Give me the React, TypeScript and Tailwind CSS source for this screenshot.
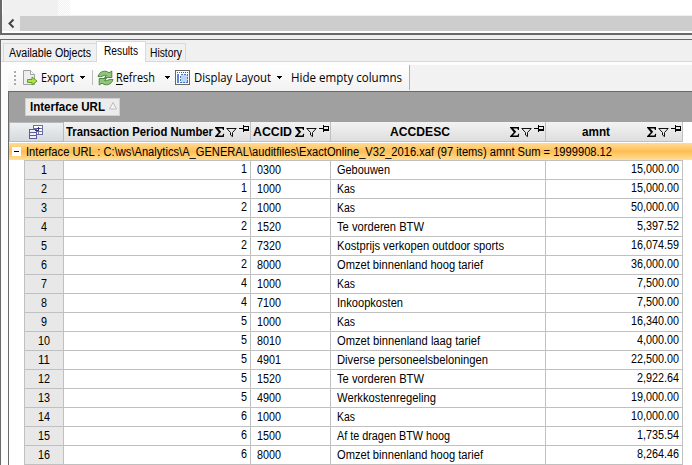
import React, { useLayoutEffect, useRef, useState } from "react";

const ui = "font-['Open_Sans','Noto_Sans',sans-serif]";

// A label condensed or widened to the width of its slot.
function T({ children, w, className = "" }: { children: React.ReactNode; w: number; className?: string }) {
  const ref = useRef<HTMLSpanElement>(null);
  const [scale, setScale] = useState(1);
  useLayoutEffect(() => {
    if (ref.current) setScale(w / ref.current.getBoundingClientRect().width);
  }, [w]);
  return (
    <span className={"block h-4 shrink-0 leading-4 " + className} style={{ width: w }}>
      <span className="block w-max origin-left whitespace-nowrap" style={{ transform: `scaleX(${scale})` }}>
        <span ref={ref} className="inline-block">{children}</span>
      </span>
    </span>
  );
}

const rows: [string, string, string, number, string][] = [
  ["1", "0300", "Gebouwen", 53, "15,000.00"],
  ["1", "1000", "Kas", 18, "15,000.00"],
  ["2", "1000", "Kas", 18, "50,000.00"],
  ["2", "1520", "Te vorderen BTW", 87, "5,397.52"],
  ["2", "7320", "Kostprijs verkopen outdoor sports", 167, "16,074.59"],
  ["2", "8000", "Omzet binnenland hoog tarief", 146, "36,000.00"],
  ["4", "1000", "Kas", 18, "7,500.00"],
  ["4", "7100", "Inkoopkosten", 66, "7,500.00"],
  ["5", "1000", "Kas", 18, "16,340.00"],
  ["5", "8010", "Omzet binnenland laag tarief", 143, "4,000.00"],
  ["5", "4901", "Diverse personeelsbeloningen", 151, "22,500.00"],
  ["5", "1520", "Te vorderen BTW", 87, "2,922.64"],
  ["5", "4900", "Werkkostenregeling", 99, "19,000.00"],
  ["6", "1000", "Kas", 18, "10,000.00"],
  ["6", "1500", "Af te dragen BTW hoog", 113, "1,735.54"],
  ["6", "8000", "Omzet binnenland hoog tarief", 146, "8,264.46"],
];

function Tools() {
  return (
    <svg width="36" height="14" viewBox="0 0 36 14" className="shrink-0">
      <path d="M1 2H10V5H9L8.3 3.4H4.2L7.2 6.8L3.8 10.4H8.5L9.3 8.8H10.2L9.8 12H1V11.2L4.8 7.2L1 2.8Z" fill="#000" />
      <path d="M12.8 3.5H22.2L18.5 7.5V11.6L16.5 10V7.5Z" fill="none" stroke="#111" />
      <path d="M25 3.5H29M29.5 0V7M30 1.5H34.5V5.5H30M30 4.5H34" fill="none" stroke="#000" shapeRendering="crispEdges" />
    </svg>
  );
}

const Caret = () => (
  <svg width="5" height="3" className="shrink-0" shapeRendering="crispEdges"><path d="M0 0H5L2.5 3Z" /></svg>
);

function ExportIcon() {
  return (
    <svg width="16" height="16" viewBox="0 0 16 16">
      <path d="M1.5.5H8.5L12.5 4.5V14.5H1.5Z" fill="#eee" stroke="#a0a0a0" />
      <path d="M8.5.5V4.5H12.5" fill="#fff" stroke="#a0a0a0" />
      <path d="M5.5 9.5H10V7L15 11L10 15V12.5H5.5Z" fill="#b4e04a" stroke="#5f9d2c" />
    </svg>
  );
}

function RefreshIcon() {
  return (
    <svg width="17" height="16" viewBox="0 0 17 16">
      <path d="M1 6.5C2.5 1 8.5-.2 12 2.8L14.8 1V7.5H7.5L9.4 5.5C7 4.2 5.5 7.5 1 6.5Z" fill="#92c57c" stroke="#467f39" strokeWidth=".9" />
      <path d="M16 9.5C14.5 15 8.5 16.2 5 13.2L2.2 15V8.5H9.5L7.6 10.5C10 11.8 11.5 8.5 16 9.5Z" fill="#92c57c" stroke="#467f39" strokeWidth=".9" />
    </svg>
  );
}

function LayoutIcon() {
  return (
    <svg width="15" height="15" viewBox="0 0 15 15" shapeRendering="crispEdges">
      <rect x=".5" y=".5" width="14" height="14" fill="#fff" stroke="#666" />
      <path d="M2 2.5H13" stroke="#2f66b8" strokeDasharray="1 1" />
      <rect x="2" y="4" width="2" height="9" fill="#5b8ad0" />
      <rect x="5.5" y="4.5" width="7" height="8" fill="#c0d6f5" stroke="#4677c5" strokeDasharray="2 1" />
    </svg>
  );
}

function ChooserIcon() {
  return (
    <svg width="15" height="14" viewBox="0 0 15 14" shapeRendering="crispEdges">
      <path d="M4.5.5H13.5V9.5H4.5ZM4.5 3.5H13.5M4.5 6.5H13.5M9.5 3V9" fill="#fff" stroke="#6c6ca8" />
      <path d="M.5 4.5H7.5V13.5H.5ZM.5 7.5H7.5M.5 10.5H7.5" fill="#f0f0f8" stroke="#5c5c9c" />
      <path d="M6 5.5H9.5V2M8 3.5H11" fill="none" stroke="#333377" />
    </svg>
  );
}

const head = "flex h-[20px] shrink-0 items-start border-b border-r border-[#c0c0c0] bg-linear-to-b from-[#f3f3f3] to-[#dedede] pt-[2px]";

export default function App() {
  return (
    <div className="h-[465px] w-[692px] overflow-hidden bg-[#f0f0f0] font-['Liberation_Sans',Arial,sans-serif] text-[12px] text-black">
      <div className="flex h-[35px] flex-col border-b-2 border-l-2 border-b-[#696969] border-l-[#696969] bg-white">
        <div className="flex h-[15px] pl-px">
          <div className="w-[55px] bg-[#f0f0f0]" />
          <div className="w-3 bg-[conic-gradient(#f0f0f0_25%,white_0_50%,#f0f0f0_0_75%,white_0)] bg-[length:2px_2px]" />
        </div>
        <div className="flex h-[16px] items-center bg-[#f0f0f0] pl-[5px]">
          <svg width="13" height="16"><path d="M6.5 4.5L2.5 8.5L6.5 12.5" fill="none" stroke="#444" strokeWidth="2" /></svg>
          <div className="h-[15px] flex-1 bg-[#cdcdcd]" />
        </div>
      </div>
      <div className="h-1" />
      <div className="h-[426px] border-l border-t border-[#696969]">
        <div className="flex h-[22px] items-end border-b border-[#d9d9d9] pl-[2px]">
          <div className="flex h-[18px] w-[93px] items-center border-l border-t border-[#d9d9d9] pl-[5px]"><T w={82}>Available Objects</T></div>
          <div className="-mb-px flex h-[21px] w-[50px] items-start border border-b-0 border-[#d9d9d9] bg-white pl-[7px] pt-[1px]"><T w={34}>Results</T></div>
          <div className="flex h-[18px] w-[40px] items-center border-r border-t border-[#d9d9d9] pl-[4px]"><T w={32}>History</T></div>
        </div>
        <div className="h-[403px] bg-[#fcfcfc] pl-[7px] pt-[3px]">
          <div className="flex h-[26px] bg-[#f2f2f2]">
            <div className={"flex h-[25px] w-[402px] items-center border-r border-[#b0b0b0] bg-linear-to-b from-white to-[#f2f2f2] pl-[6px] " + ui}>
              <svg width="2" height="14"><path d="M1 0V14" stroke="#aaa" strokeWidth="2" strokeDasharray="2 2" /></svg>
              <div className="ml-[6px]"><ExportIcon /></div>
              <T w={33} className="ml-[3px]">Export</T>
              <div className="ml-[6px]"><Caret /></div>
              <div className="ml-[7px] h-[15px] w-px bg-[#bdbdbd]" />
              <div className="ml-[4px]"><RefreshIcon /></div>
              <T w={39} className="ml-[2px]"><span className="underline underline-offset-2">R</span>efresh</T>
              <div className="ml-[10px]"><Caret /></div>
              <div className="ml-[5px]"><LayoutIcon /></div>
              <T w={77} className="ml-[4px]">Display Layout</T>
              <div className="ml-[6px]"><Caret /></div>
              <T w={111} className="ml-[9px]">Hide empty columns</T>
            </div>
          </div>
          <div className="h-[374px] border-l border-t border-[#696969] bg-white">
            <div className="h-[30px] bg-[#a0a0a0] pl-[16px] pt-[6px]">
              <div className="flex h-[18px] w-[95px] items-center border border-[#d0d0d0] bg-[#ececec] pl-[4px] font-bold">
                <T w={75}>Interface URL</T>
                <svg width="8" height="8" className="mb-[3px] ml-[4px]"><path d="M.5 7L4 .5L7.5 7Z" fill="#f4f4f4" stroke="#bbb" /></svg>
              </div>
            </div>
            <div className="flex h-[21px] font-bold">
              <div className="flex h-[20px] w-[55px] items-center justify-center border border-[#b5babd] bg-linear-to-b from-[#eef0f1] to-[#d5dadd]"><ChooserIcon /></div>
              <div className={head + " w-[187px] pl-[2px]"}><T w={147}>Transaction Period Number</T><div className="ml-[1px] pt-[1px]"><Tools /></div></div>
              <div className={head + " w-[80px] pl-[2px]"}><T w={39}>ACCID</T><div className="ml-[2px] pt-[1px]"><Tools /></div></div>
              <div className={head + " w-[215px] pl-[59px]"}><T w={60}>ACCDESC</T><div className="ml-[59px] pt-[1px]"><Tools /></div></div>
              <div className={head + " w-[137px] pl-[36px]"}><T w={28}>amnt</T><div className="ml-[36px] pt-[1px]"><Tools /></div></div>
            </div>
            <div className="flex h-[17px] items-center bg-linear-to-b from-[#ffdb95] via-[#ffbe50] to-[#ffdf98] pl-[3px]">
              <svg width="9" height="9" shapeRendering="crispEdges"><rect width="9" height="9" fill="#fff" /><path d="M2 4.5H7" stroke="#000" /></svg>
              <T w={586} className="ml-[5px]">Interface URL : C:\ws\Analytics\A_GENERAL\auditfiles\ExactOnline_V32_2016.xaf (97 items) amnt Sum = 1999908.12</T>
            </div>
            <div className="ml-[15px] w-[659px] border-t border-[#c0c0c0]">
              {rows.map(([p, id, desc, w, amount], i) => (
                <div key={i} className="flex h-[19px] border-b border-[#c0c0c0]">
                  <div className="flex w-[40px] items-center justify-center border-x border-[#c0c0c0] bg-[#e8e8e8]"><T w={i > 8 ? 12 : 6}>{i + 1}</T></div>
                  <div className="flex w-[187px] justify-end border-r border-[#c0c0c0] pr-[3px]"><T w={6}>{p}</T></div>
                  <div className="flex w-[80px] items-center border-r border-[#c0c0c0] pl-[6px]"><T w={24}>{id}</T></div>
                  <div className="flex w-[215px] items-center border-r border-[#c0c0c0] pl-[6px]"><T w={w}>{desc}</T></div>
                  <div className="flex w-[137px] justify-end border-r border-[#c0c0c0] pr-[3px]"><T w={amount.length === 9 ? 48 : 42}>{amount}</T></div>
                </div>
              ))}
            </div>
          </div>
        </div>
      </div>
    </div>
  );
}
